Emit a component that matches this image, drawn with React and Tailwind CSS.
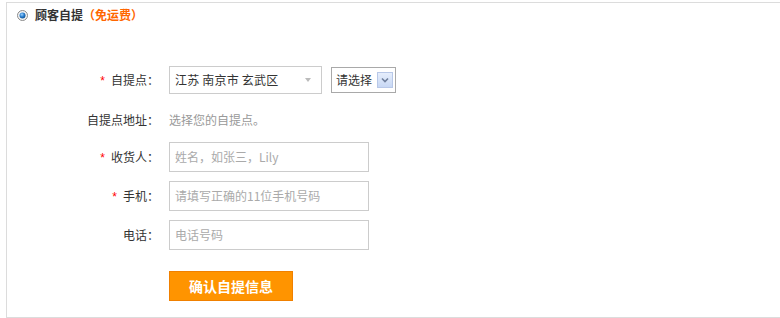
import React from "react";

const font = { fontFamily: '"Noto Sans CJK SC", "Liberation Sans", sans-serif' };

const Radio = () => (
  <svg width="11" height="11" viewBox="0 0 11 11">
    <defs>
      <radialGradient id="rb" cx="40%" cy="35%" r="60%">
        <stop offset="0%" stopColor="#9fd4ff" />
        <stop offset="60%" stopColor="#2a7fd0" />
        <stop offset="100%" stopColor="#145a9c" />
      </radialGradient>
    </defs>
    <circle cx="5.5" cy="5.5" r="5" fill="#f4f4f4" stroke="#8a8a8a" strokeWidth="1" />
    <circle cx="5.5" cy="5.5" r="3" fill="url(#rb)" />
  </svg>
);

const Label = ({ req, children }) => (
  <span className="w-[152px] shrink-0 text-right text-[12px] text-[#333]">
    {req && <span className="mr-[6px] text-[#f00]" style={{ fontFamily: '"Liberation Sans", sans-serif' }}>*</span>}
    {children}
  </span>
);

const Field = ({ placeholder }) => (
  <div className="ml-[10px] flex h-[30px] w-[200px] items-center border border-[#ccc] bg-white pl-[5px] text-[12px] text-[#aaa]">
    {placeholder}
  </div>
);

export default function App() {
  return (
    <div className="h-[318px] w-[780px] overflow-hidden bg-white" style={font}>
      <div className="ml-[6px] mt-[2px] h-[316px] w-[800px] border-b border-l border-t border-[#dcdcdc]">
        {/* title */}
        <div className="flex h-[23px] items-center pl-[10px] pt-[1px] text-[12px] font-bold">
          <Radio />
          <span className="ml-[7px] text-[#333]">顾客自提</span>
          <span className="text-[#ff6600]">（免运费）</span>
        </div>

        {/* form */}
        <div className="mt-[40px] flex flex-col">
          <div className="flex h-[28px] items-center">
            <Label req>自提点：</Label>
            <div className="ml-[10px] flex h-[28px] w-[153px] items-center justify-between border border-[#ccc] pl-[5px] pr-[10px] text-[12px] text-[#333]">
              <span className="tracking-[0.2px]">江苏 南京市 玄武区</span>
              <span className="h-0 w-0 border-l-[3px] border-r-[3px] border-t-[4px] border-l-transparent border-r-transparent border-t-[#bbb]" />
            </div>
            <div className="ml-[9px] flex h-[26px] w-[65px] items-center justify-between border border-[#a9a9a9] pl-[4px] pr-[2px] text-[12px] text-[#333]">
              <span>请选择</span>
              <span className="flex h-[16px] w-[16px] items-center justify-center border border-[#b8c8e8] bg-gradient-to-b from-[#e6eefc] to-[#c8d8f4]">
                <svg width="8" height="6" viewBox="0 0 8 6">
                  <path d="M1 1.5 L4 4.5 L7 1.5" fill="none" stroke="#6f7f9c" strokeWidth="1.6" />
                </svg>
              </span>
            </div>
          </div>

          <div className="mt-[11px] flex h-[30px] items-center">
            <Label>自提点地址：</Label>
            <span className="ml-[10px] text-[12px] text-[#999]">选择您的自提点。</span>
          </div>

          <div className="mt-[7px] flex items-center">
            <Label req>收货人：</Label>
            <Field placeholder="姓名，如张三，Lily" />
          </div>
          <div className="mt-[9px] flex items-center">
            <Label req>手机：</Label>
            <Field placeholder="请填写正确的11位手机号码" />
          </div>
          <div className="mt-[9px] flex items-center">
            <Label>电话：</Label>
            <Field placeholder="电话号码" />
          </div>

          <div className="mt-[21px] flex">
            <div className="ml-[162px] flex h-[30px] w-[124px] items-center justify-center border border-[#f08000] bg-[#ff9400] text-[14px] font-bold text-white">
              确认自提信息
            </div>
          </div>
        </div>
      </div>
    </div>
  );
}
